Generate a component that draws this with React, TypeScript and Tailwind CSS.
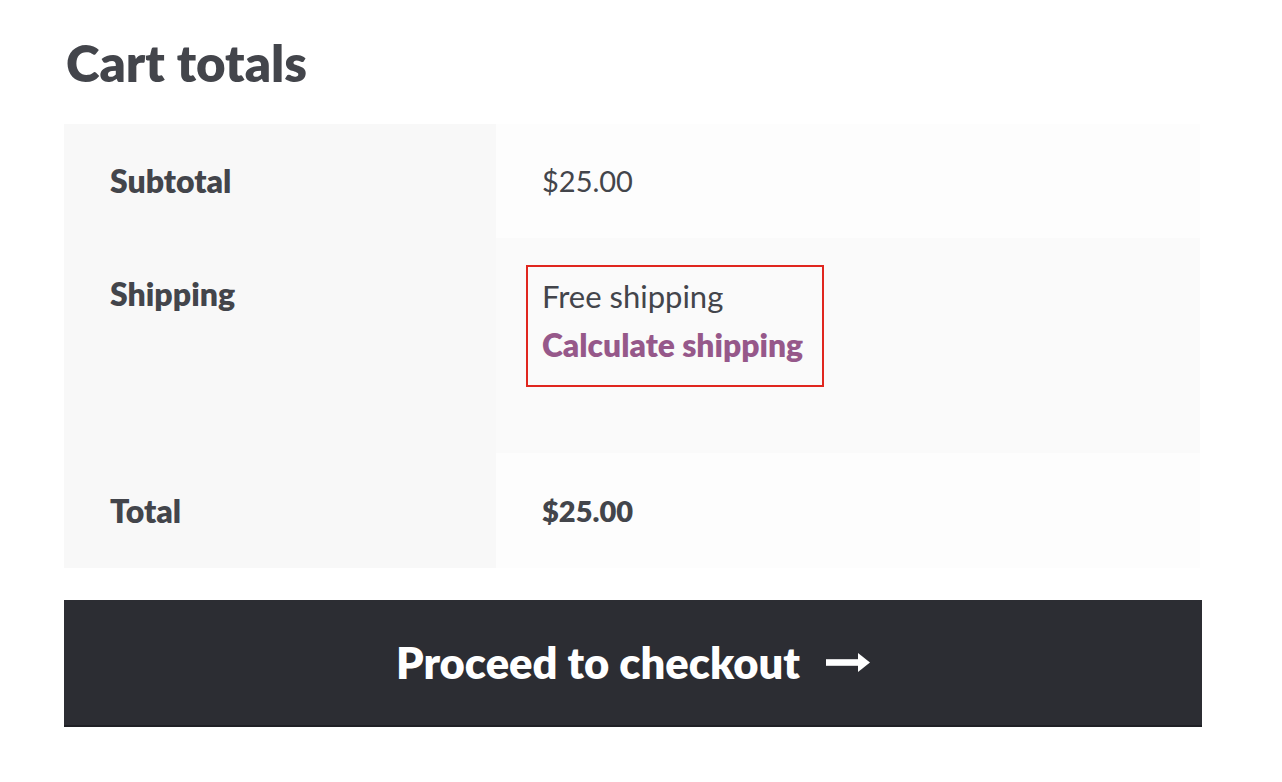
export default function App() {
  const font = { fontFamily: '"Source Sans Pro", Lato, "Noto Sans", sans-serif' };
  return (
    <div className="min-h-[782px] w-[1282px] bg-white text-[#43454b]" style={font}>
      <div className="pl-[64px] pr-[80px] pt-[31px]">
        <h2 className="pl-[2px] text-[51px] font-extrabold leading-[64px] text-[#43454b]">Cart totals</h2>

        <div className="mt-[29px] grid w-[1136px] grid-cols-[432px_704px]">
          {/* Subtotal */}
          <div className="flex h-[114px] items-center bg-[#f8f8f8] pl-[46px] text-[32px] font-extrabold">
            Subtotal
          </div>
          <div className="flex h-[114px] items-center bg-[#fdfdfd] pl-[46px] text-[29px]">
            $25.00
          </div>

          {/* Shipping */}
          <div className="h-[215px] bg-[#f8f8f8] pl-[46px] pt-[38px] text-[32px] font-extrabold leading-[36px]">
            Shipping
          </div>
          <div className="h-[215px] bg-[#fafafa] pl-[30px] pt-[27px]">
            <div className="inline-block border-2 border-[#e0261e] pb-[20px] pl-[14px] pr-[19px] pt-[9px]">
              <div className="text-[31px] leading-[40px]">Free shipping</div>
              <a className="mt-[9px] block text-[31.8px] font-extrabold leading-[40px] text-[#96588a]">Calculate shipping</a>
            </div>
          </div>

          {/* Total */}
          <div className="flex h-[115px] items-center bg-[#f8f8f8] pl-[46px] text-[32px] font-extrabold">
            Total
          </div>
          <div className="flex h-[115px] items-center bg-[#fdfdfd] pl-[46px] text-[29px] font-extrabold">
            $25.00
          </div>
        </div>

        <button className="mt-[32px] flex h-[127px] w-[1138px] items-center justify-center border-b-2 border-[#1f2025] bg-[#2c2d33] text-[43.5px] font-extrabold text-white">
          <span>Proceed to checkout</span>
          <svg className="ml-[26px]" width="44" height="19" viewBox="0 0 44 19" fill="none">
            <rect x="0" y="6.2" width="34" height="6.6" fill="white" />
            <path d="M32 0L44 9.5L32 19Z" fill="white" />
          </svg>
        </button>
      </div>
    </div>
  );
}
